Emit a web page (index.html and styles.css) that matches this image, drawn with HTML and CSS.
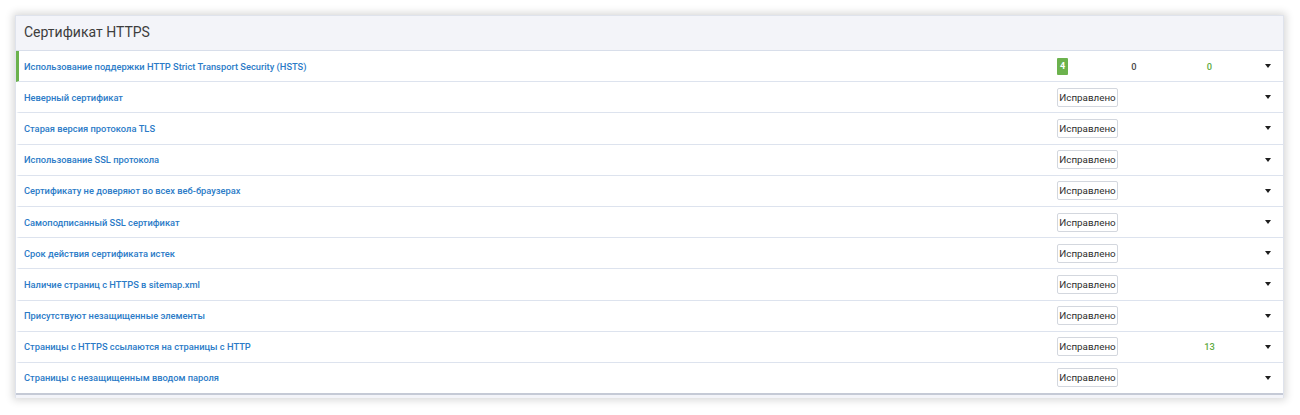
FILE: index.html
```
<!DOCTYPE html>
<html lang="ru">
<head>
<meta charset="utf-8">
<link rel="stylesheet" href="styles.css">
</head>
<body>
<div class="card">
  <div class="card-head">Сертификат HTTPS</div>
  <div class="rows">
    <div class="row row-active">
      <a class="name">Использование поддержки HTTP Strict Transport Security (HSTS)</a>
      <div class="c1"><span class="badge">4</span></div>
      <div class="c2">0</div>
      <div class="c3 green">0</div>
      <div class="caret"></div>
    </div>
    <div class="row"><a class="name">Неверный сертификат</a><div class="c1"><span class="btn">Исправлено</span></div><div class="c2"></div><div class="c3"></div><div class="caret"></div></div>
    <div class="row"><a class="name">Старая версия протокола TLS</a><div class="c1"><span class="btn">Исправлено</span></div><div class="c2"></div><div class="c3"></div><div class="caret"></div></div>
    <div class="row"><a class="name">Использование SSL протокола</a><div class="c1"><span class="btn">Исправлено</span></div><div class="c2"></div><div class="c3"></div><div class="caret"></div></div>
    <div class="row"><a class="name">Сертификату не доверяют во всех веб-браузерах</a><div class="c1"><span class="btn">Исправлено</span></div><div class="c2"></div><div class="c3"></div><div class="caret"></div></div>
    <div class="row"><a class="name">Самоподписанный SSL сертификат</a><div class="c1"><span class="btn">Исправлено</span></div><div class="c2"></div><div class="c3"></div><div class="caret"></div></div>
    <div class="row"><a class="name">Срок действия сертификата истек</a><div class="c1"><span class="btn">Исправлено</span></div><div class="c2"></div><div class="c3"></div><div class="caret"></div></div>
    <div class="row"><a class="name">Наличие страниц с HTTPS в sitemap.xml</a><div class="c1"><span class="btn">Исправлено</span></div><div class="c2"></div><div class="c3"></div><div class="caret"></div></div>
    <div class="row"><a class="name">Присутствуют незащищенные элементы</a><div class="c1"><span class="btn">Исправлено</span></div><div class="c2"></div><div class="c3"></div><div class="caret"></div></div>
    <div class="row"><a class="name">Страницы с HTTPS ссылаются на страницы с HTTP</a><div class="c1"><span class="btn">Исправлено</span></div><div class="c2"></div><div class="c3 green">13</div><div class="caret"></div></div>
    <div class="row"><a class="name">Страницы с незащищенным вводом пароля</a><div class="c1"><span class="btn">Исправлено</span></div><div class="c2"></div><div class="c3"></div><div class="caret"></div></div>
  </div>
  <div class="card-foot"></div>
</div>
</body>
</html>
```
FILE: styles.css
```
html, body {
  margin: 0;
  padding: 0;
  background: #ffffff;
}
body {
  padding: 15px 16px 17px 15px;
  font-family: Roboto, "Noto Sans", Arial, sans-serif;
}
.card {
  background: #fff;
  border: 1px solid #dfe3ec;
  border-bottom: none;
  box-shadow: 0 0 8px 2px rgba(0,0,0,0.16);
}
.card-head {
  height: 34px;
  line-height: 32px;
  padding-left: 8px;
  background: #f3f4f9;
  border-bottom: 1px solid #d8deea;
  font-size: 14px;
  color: #3d3d3d;
}
.row {
  display: flex;
  align-items: center;
  height: 30.2px;
  border-bottom: 1px solid #dde3ee;
  font-size: 9.3px;
  border-left: 3px solid transparent;
  padding-left: 5px;
  padding-right: 0;
}
.row:last-child { border-bottom: none; }
.row-active { border-left-color: #6cb24d; }
.name {
  flex: 1;
  color: #2b7bc7;
  font-weight: 500;
}
.c1 { width: 61px; display: flex; align-items: center; }
.c2 { width: 32px; text-align: center; color: #4a4a4a; font-weight: 500; }
.c3 { width: 87px; margin-left: 16px; text-align: center; color: #4a4a4a; font-weight: 500; }
.green { color: #62ab43; }
.caret {
  width: 30px;
  display: flex;
  justify-content: center;
}
.caret::before {
  content: "";
  border-left: 3.5px solid transparent;
  border-right: 3.5px solid transparent;
  border-top: 4px solid #1e1e1e;
}
.badge {
  display: inline-block;
  background: #6cb24d;
  color: #fff;
  font-weight: 700;
  font-size: 9px;
  line-height: 17px;
  width: 11px;
  text-align: center;
  border-radius: 1px;
}
.btn {
  display: inline-block;
  box-sizing: border-box;
  width: 61px;
  height: 19px;
  line-height: 17px;
  border: 1px solid #d3d7de;
  border-radius: 2px;
  text-align: center;
  color: #2e2e2e;
  font-size: 9.8px;
}
.card-foot {
  height: 3px;
  background: #f3f4f9;
  border-top: 2px solid #c5cad6;
}
```
